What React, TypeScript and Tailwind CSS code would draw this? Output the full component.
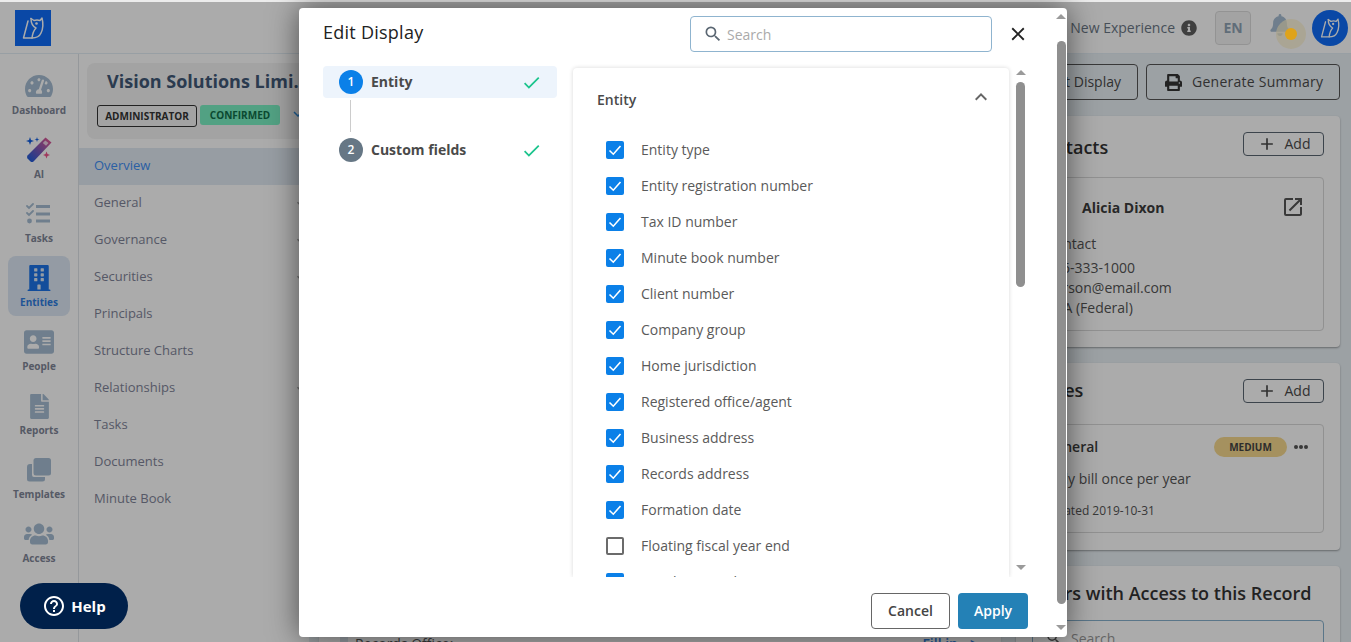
import React from 'react';
import { FaAddressCard, FaBell, FaBuilding, FaFileAlt, FaInfoCircle, FaPrint, FaTachometerAlt, FaUsers } from 'react-icons/fa';
import { MdAdd, MdCheck, MdClose, MdExpandLess, MdExpandMore, MdHelpOutline, MdOpenInNew, MdSearch } from 'react-icons/md';

const OwlLogo = ({ size }: { size: number }) => (
    <svg width={size} height={size} viewBox="0 0 36 36" fill="none" stroke="#fff" strokeWidth="1.5" strokeLinejoin="round" strokeLinecap="round">
        <path d="M16 8.500 L19 10.500 C21 9.800 23 9.800 25 10.500 L27 8 C28.500 14 28 19 26 23 C24.500 26.500 21 28 17 28 H8.500 L13 11" />
        <path d="M16 8.500 C16 14 19 17 21 18 C19 20 17.500 24 17 28" />
        <circle cx="21.500" cy="13.500" r="1.300" fill="#fff" stroke="none" />
    </svg>
);

const TasksIcon = () => (
    <svg width="26" height="22" viewBox="0 0 26 22" fill="none" stroke="#a6bdd2" strokeLinecap="round">
        <path d="M1 3 L3 5 L7 1 M1 10 L3 12 L7 8" strokeWidth="1.8" />
        <circle cx="3.500" cy="18" r="2.400" fill="#a6bdd2" stroke="none" />
        <path d="M10 3.500 H24 M10 11 H24 M10 18 H24" strokeWidth="3" strokeLinecap="butt" />
    </svg>
);

const WandIcon = () => (
    <svg width="26" height="26" viewBox="0 0 26 26">
        <defs>
            <linearGradient id="wand" x1="0" y1="1" x2="1" y2="0">
                <stop offset="0" stopColor="#0f5ce0" />
                <stop offset="1" stopColor="#f0568c" />
            </linearGradient>
        </defs>
        <path d="M19.500 0.500 L25.500 5.500 L7.500 24.500 Q6 25.500 4.500 24.500 L1.500 21.500 Q0.500 20 1.500 18.500 Z" fill="url(#wand)" />
        <path d="M19.300 3.500 L22.500 6 L20 8.800 L16.800 6 Z" fill="#fff" opacity="0.7" />
        <path d="M4 0 L5 3 L8 4 L5 5 L4 8 L3 5 L0 4 L3 3 Z" fill="#0f5ce0" />
        <path d="M11 0 L11.600 2 L13.500 2.500 L11.600 3 L11 5 L10.400 3 L8.500 2.500 L10.400 2 Z" fill="#0f5ce0" />
        <path d="M20.500 14.500 L21.500 17 L24 18 L21.500 19 L20.500 21.500 L19.500 19 L17 18 L19.500 17 Z" fill="#f0568c" />
    </svg>
);

const TemplatesIcon = () => (
    <svg width="26" height="26" viewBox="0 0 26 26" fill="#a6bdd2">
        <path d="M4 7 H6 V18 Q6 20 8 20 H19 V22 Q19 24.500 16.500 24.500 H3.500 Q1 24.500 1 22 V10 Q1 7 4 7 Z" />
        <rect x="7.500" y="1" width="17.500" height="17.500" rx="2.500" />
    </svg>
);

const sideItems = [
    { label: 'Dashboard', icon: <FaTachometerAlt size={28} color="#a6bdd2" /> },
    { label: 'AI', icon: <WandIcon /> },
    { label: 'Tasks', icon: <TasksIcon /> },
    { label: 'Entities', icon: <FaBuilding size={26} color="#1d74e8" />, active: true },
    { label: 'People', icon: <FaAddressCard size={30} color="#a6bdd2" /> },
    { label: 'Reports', icon: <FaFileAlt size={25} color="#a6bdd2" /> },
    { label: 'Templates', icon: <TemplatesIcon /> },
    { label: 'Access', icon: <FaUsers size={30} color="#a6bdd2" /> },
];

const navItems = [
    { label: 'Overview', active: true },
    { label: 'General', more: true },
    { label: 'Governance', more: true },
    { label: 'Securities', more: true },
    { label: 'Principals' },
    { label: 'Structure Charts' },
    { label: 'Relationships', more: true },
    { label: 'Tasks' },
    { label: 'Documents' },
    { label: 'Minute Book' },
];

const fields = [
    { label: 'Entity type', checked: true },
    { label: 'Entity registration number', checked: true },
    { label: 'Tax ID number', checked: true },
    { label: 'Minute book number', checked: true },
    { label: 'Client number', checked: true },
    { label: 'Company group', checked: true },
    { label: 'Home jurisdiction', checked: true },
    { label: 'Registered office/agent', checked: true },
    { label: 'Business address', checked: true },
    { label: 'Records address', checked: true },
    { label: 'Formation date', checked: true },
    { label: 'Floating fiscal year end', checked: false },
    { label: 'Fiscal year end', checked: true },
];

const AddButton = () => (
    <button className="flex h-6 w-[81px] shrink-0 items-center justify-center gap-2 rounded border border-[#5a6672] text-[14px]">
        <MdAdd size={20} color="#4a4a4a" /> <span className="pb-[2px] text-[#4a4a4a]">Add</span>
    </button>
);

// scrollbar of the browser, arrows on both ends
const ArrowUp = () => <div className="h-0 w-0 border-x-[5px] border-b-[5px] border-x-transparent border-b-[#9a9a9a]" />;
const ArrowDown = () => <div className="h-0 w-0 border-x-[5px] border-t-[5px] border-x-transparent border-t-[#9a9a9a]" />;

export default function App() {
    return (
        <div className="relative flex h-[642px] w-[1351px] flex-col overflow-hidden bg-white font-['Open_Sans',sans-serif]">
            <div className="h-[2px] shrink-0 bg-[#ececec]" />

            {/* Top bar */}
            <header className="flex h-[52px] shrink-0 items-center justify-between border-b border-[#e3edf5] bg-white pl-[15px] pr-[3px]">
                <div className="flex h-9 w-9 items-center justify-center bg-[#0f6cf8]">
                    <OwlLogo size={36} />
                </div>
                <div className="flex items-center">
                    <span className="text-[14px] text-[#6b7785]">New Experience</span>
                    <FaInfoCircle size={16} color="#5f5f5f" className="ml-[6px]" />
                    <div className="ml-[18px] flex h-[34px] w-9 items-center justify-center rounded border border-[#dcdcdc] bg-[#f4f4f4] text-[14px] font-bold text-[#8fa3b5]">EN</div>
                    <div className="relative ml-3 flex h-9 w-[43px] items-start pt-[4px]">
                        <FaBell size={22} color="#a6bdd2" className="ml-[6px]" />
                        <div className="absolute left-[13px] top-[9px] h-[30px] w-[30px] rounded-full bg-[#fdf3cf]/70" />
                    </div>
                    <div className="ml-[6px] flex h-9 w-9 items-center justify-center rounded-full bg-[#0f6cf8]">
                        <OwlLogo size={32} />
                    </div>
                </div>
            </header>

            <div className="flex min-h-0 flex-1">
                {/* Icon sidebar */}
                <aside className="flex w-[79px] shrink-0 flex-col gap-1 border-r border-[#dfe3e8] px-2 pt-[10px]">
                    {sideItems.map(item => (
                        <div key={item.label} className={`flex h-[60px] flex-col items-center rounded-lg pt-2 ${item.active ? 'bg-[#dde8f5]' : ''}`}>
                            <div className="flex h-7 items-center justify-center">{item.icon}</div>
                            <span className={`mt-[3px] text-[10px] font-bold leading-[14px] ${item.active ? 'text-[#2f7de0]' : 'text-[#7f8697]'}`}>{item.label}</span>
                        </div>
                    ))}
                </aside>

                {/* Section nav */}
                <nav className="w-[230px] shrink-0 pt-[9px]">
                    <div className="ml-2 h-[76px] rounded-l-lg bg-[#f3f3f3] pl-[10px] pt-[6px]">
                        <div className="ml-[10px] whitespace-nowrap text-[18px] font-bold leading-6 text-[#415877]">Vision Solutions Limi...</div>
                        <div className="mt-3 flex items-start gap-[3px]">
                            <span className="flex h-[22px] w-[100px] items-center justify-center rounded-[3px] border border-[#333] text-[10px] font-bold text-[#333]">ADMINISTRATOR</span>
                            <span className="flex h-5 w-20 items-center justify-center rounded-[3px] bg-[#7bf0c3] text-[10px] font-bold text-[#0f6e4a]">CONFIRMED</span>
                            <MdExpandMore size={18} color="#2f8fe0" className="ml-[6px]" />
                        </div>
                    </div>
                    <ul className="mt-[9px]">
                        {navItems.map(item => (
                            <li key={item.label} className={`flex h-[37px] items-center justify-between pl-[15px] text-[13px] ${item.active ? 'bg-[#e2eaf4] text-[#3f8ff5]' : 'text-[#7f8499]'}`}>
                                <span className="pb-[2px]">{item.label}</span>
                                {item.more && <MdExpandMore size={16} color="#a0a0a0" />}
                            </li>
                        ))}
                    </ul>
                </nav>

                {/* Main area */}
                <main className="min-w-0 flex-1 bg-[#e9f0f5] pr-[11px] pt-[10px]">
                    <div className="flex justify-end gap-2">
                        <button className="flex h-9 w-[150px] items-center justify-end rounded border border-[#555] pb-[2px] pr-4 text-[14px] font-medium text-[#4a4a4a]">Edit Display</button>
                        <button className="flex h-9 w-[194px] items-center gap-[10px] rounded border border-[#555] pl-[18px] text-[14px] font-medium tracking-[0.25px] text-[#4a4a4a]">
                            <FaPrint size={17} color="#333" /> <span className="pb-[2px]">Generate Summary</span>
                        </button>
                    </div>
                    <div className="mt-4 flex gap-[15px] pl-[10px]">
                        <div className="flex h-[540px] flex-1 items-start justify-between rounded-lg bg-white pl-9 pr-[23px] pt-[517px] text-[14px] shadow-sm">
                            <span className="flex items-center gap-[7px] text-[#555]">
                                <span className="-ml-[15px] h-4 w-2 bg-[#dfe8f0]" /> Records Office:
                            </span>
                            <span className="flex items-center gap-3 font-semibold text-[#2f7de0]">Fill in <span>&gt;</span></span>
                        </div>
                        <div className="flex w-[324px] shrink-0 flex-col gap-4">
                            <section className="h-[231px] rounded bg-white px-4 pt-4 shadow-[0_1px_2px_rgba(0,0,0,0.35)]">
                                <div className="flex h-6 items-start justify-between">
                                    <h3 className="text-[18px] font-semibold leading-[30px] text-[#333]">Contacts</h3>
                                    <AddButton />
                                </div>
                                <div className="mt-[21px] h-[154px] rounded border border-[#d8d8d8] pl-[13px] pr-3 pt-[17px] text-[14px] text-[#555]">
                                    <div className="flex h-6 items-center justify-between pl-[36px] pr-[6px]">
                                        <span className="font-bold text-[#3c3c3c]">Alicia Dixon</span>
                                        <MdOpenInNew size={24} color="#555" />
                                    </div>
                                    <div className="mt-[15px] leading-5">Contact</div>
                                    <div className="mt-1 leading-5">416-333-1000</div>
                                    <div className="leading-5">person@email.com</div>
                                    <div className="leading-5">CRA (Federal)</div>
                                </div>
                            </section>
                            <section className="h-[187px] rounded bg-white px-4 pt-4 shadow-[0_1px_2px_rgba(0,0,0,0.35)]">
                                <div className="flex h-6 items-start justify-between">
                                    <h3 className="-mt-[1px] text-[18px] font-semibold leading-6 text-[#333]">Notes</h3>
                                    <AddButton />
                                </div>
                                <div className="mt-[21px] h-[109px] rounded border border-[#d8d8d8] px-3 pt-3 text-[14px] text-[#555]">
                                    <div className="flex h-5 items-center justify-between">
                                        <span className="pb-[2px] font-semibold text-[#3c3c3c]">General</span>
                                        <div className="flex items-center gap-[7px] pr-[3px]">
                                            <span className="flex h-5 w-[73px] items-center justify-center rounded-full bg-[#f6d98e] text-[10px] font-bold text-[#444]">MEDIUM</span>
                                            <span className="flex gap-[1px]">
                                                <span className="h-1 w-1 rounded-full bg-[#555]" />
                                                <span className="h-1 w-1 rounded-full bg-[#555]" />
                                                <span className="h-1 w-1 rounded-full bg-[#555]" />
                                            </span>
                                        </div>
                                    </div>
                                    <div className="mt-3 leading-5">Only bill once per year</div>
                                    <div className="mt-3 text-[12px] leading-5">Created 2019-10-31</div>
                                </div>
                            </section>
                            <section className="h-[120px] rounded bg-white px-4 pt-4 shadow-[0_1px_2px_rgba(0,0,0,0.35)]">
                                <h3 className="-mt-[1px] whitespace-nowrap text-[18px] font-semibold leading-6 text-[#333]">Users with Access to this Record</h3>
                                <div className="mt-[15px] flex h-9 items-center gap-2 rounded border border-[#86b0cc] px-3 text-[14px] text-[#999]">
                                    <MdSearch size={18} color="#555" /> Search
                                </div>
                            </section>
                        </div>
                    </div>
                </main>
            </div>

            {/* Backdrop */}
            <div className="absolute inset-x-0 bottom-0 top-[2px] bg-black/33" />

            {/* These two stay above the backdrop */}
            <div className="absolute left-[1285px] top-[28px] h-3 w-3 rounded-full bg-[#dfa31a]" />
            <button className="absolute bottom-[13px] left-5 flex h-[46px] w-[108px] items-center justify-center gap-[5px] rounded-full bg-[#00204a] text-[15px] font-bold text-white">
                <MdHelpOutline size={24} /> Help
            </button>

            {/* Edit Display dialog */}
            <div className="absolute left-[299px] top-2 flex h-[629px] w-[768px] rounded-sm bg-white shadow-[0_0_30px_rgba(0,0,0,0.55)]">
                <div className="flex min-w-0 flex-1 flex-col">
                    <div className="flex h-[60px] shrink-0 items-start pl-6 pt-2">
                        <h2 className="w-[367px] pt-[1px] text-[18px] font-medium leading-[30px] tracking-[0.25px] text-[#222]">Edit Display</h2>
                        <div className="flex h-9 w-[302px] items-center gap-[4px] rounded border border-[#8fb4cf] pl-3 text-[14px] text-[#aaa]">
                            <MdSearch size={20} color="#5a6672" /> Search
                        </div>
                        <MdClose size={22} color="#222" className="ml-[15px] mt-[7px]" />
                    </div>
                    <div className="flex min-h-0 flex-1 pl-6">
                        {/* Steps */}
                        <div className="w-[234px] shrink-0 text-[14px] font-bold text-[#4a4a4a]">
                            <div className="mt-[-2px] flex h-8 items-center rounded bg-[#edf4fc] pl-4 pr-[15px]">
                                <span className="flex h-6 w-6 items-center justify-center rounded-full bg-[#0b80e8] text-[12px] font-semibold text-white">1</span>
                                <span className="ml-2 flex-1 pb-[2px]">Entity</span>
                                <MdCheck size={21} color="#1cc48d" />
                            </div>
                            <div className="ml-[27px] mt-[2px] h-8 w-px bg-[#ccc]" />
                            <div className="mt-[6px] flex h-6 items-center pl-4 pr-[15px]">
                                <span className="flex h-6 w-6 items-center justify-center rounded-full bg-[#667785] text-[12px] font-semibold text-white">2</span>
                                <span className="ml-2 flex-1 pb-[2px]">Custom fields</span>
                                <MdCheck size={21} color="#1cc48d" />
                            </div>
                        </div>
                        {/* Field list */}
                        <div className="ml-4 flex h-[509px] w-[436px] shrink-0 flex-col overflow-hidden rounded-t bg-white shadow-[0_0_4px_rgba(0,0,0,0.16)] [clip-path:inset(-6px_-6px_0_-6px)]">
                            <div className="flex h-16 shrink-0 items-center justify-between pl-6 pr-4">
                                <span className="pb-[2px] text-[14px] font-semibold text-[#4a4a4a]">Entity</span>
                                <MdExpandLess size={24} color="#666" className="-mt-[6px]" />
                            </div>
                            {fields.map(field => (
                                <label key={field.label} className="flex h-9 shrink-0 items-center pl-[33px] text-[14px] text-[#5a5a5a]">
                                    {field.checked ? (
                                        <svg width="18" height="18" viewBox="0 0 18 18" className="rounded-[2px] bg-[#0b80e8]">
                                            <path d="M3.500 9.500 L7.300 13.200 L14.500 5" fill="none" stroke="#fff" strokeWidth="1.600" />
                                        </svg>
                                    ) : (
                                        <span className="h-[18px] w-[18px] rounded-[2px] border-2 border-[#6b6b6b]" />
                                    )}
                                    <span className="ml-[17px] pb-[2px]">{field.label}</span>
                                </label>
                            ))}
                        </div>
                        {/* Inner scrollbar */}
                        <div className="ml-[6px] flex h-[509px] w-[11px] shrink-0 flex-col items-center pt-[2px]">
                            <ArrowUp />
                            <div className="mt-[7px] h-[205px] w-[9px] rounded-full bg-[#8f8f8f]" />
                            <div className="mt-auto mb-[7px]"><ArrowDown /></div>
                        </div>
                    </div>
                    <div className="flex h-[60px] shrink-0 items-start justify-end gap-2 pr-[27px] pt-4">
                        <button className="flex h-9 w-[79px] items-center justify-center rounded border border-[#666] pb-[2px] text-[14px] font-semibold text-[#444]">Cancel</button>
                        <button className="flex h-9 w-[70px] items-center justify-center rounded bg-[#2481b6] pb-[2px] text-[14px] font-semibold text-white">Apply</button>
                    </div>
                </div>
                {/* Outer scrollbar */}
                <div className="flex w-3 shrink-0 flex-col items-center pt-[6px]">
                    <ArrowUp />
                    <div className="mt-[22px] h-[563px] w-[9px] rounded-full bg-[#8f8f8f]" />
                    <div className="mt-auto mb-[7px]"><ArrowDown /></div>
                </div>
            </div>
        </div>
    );
}
